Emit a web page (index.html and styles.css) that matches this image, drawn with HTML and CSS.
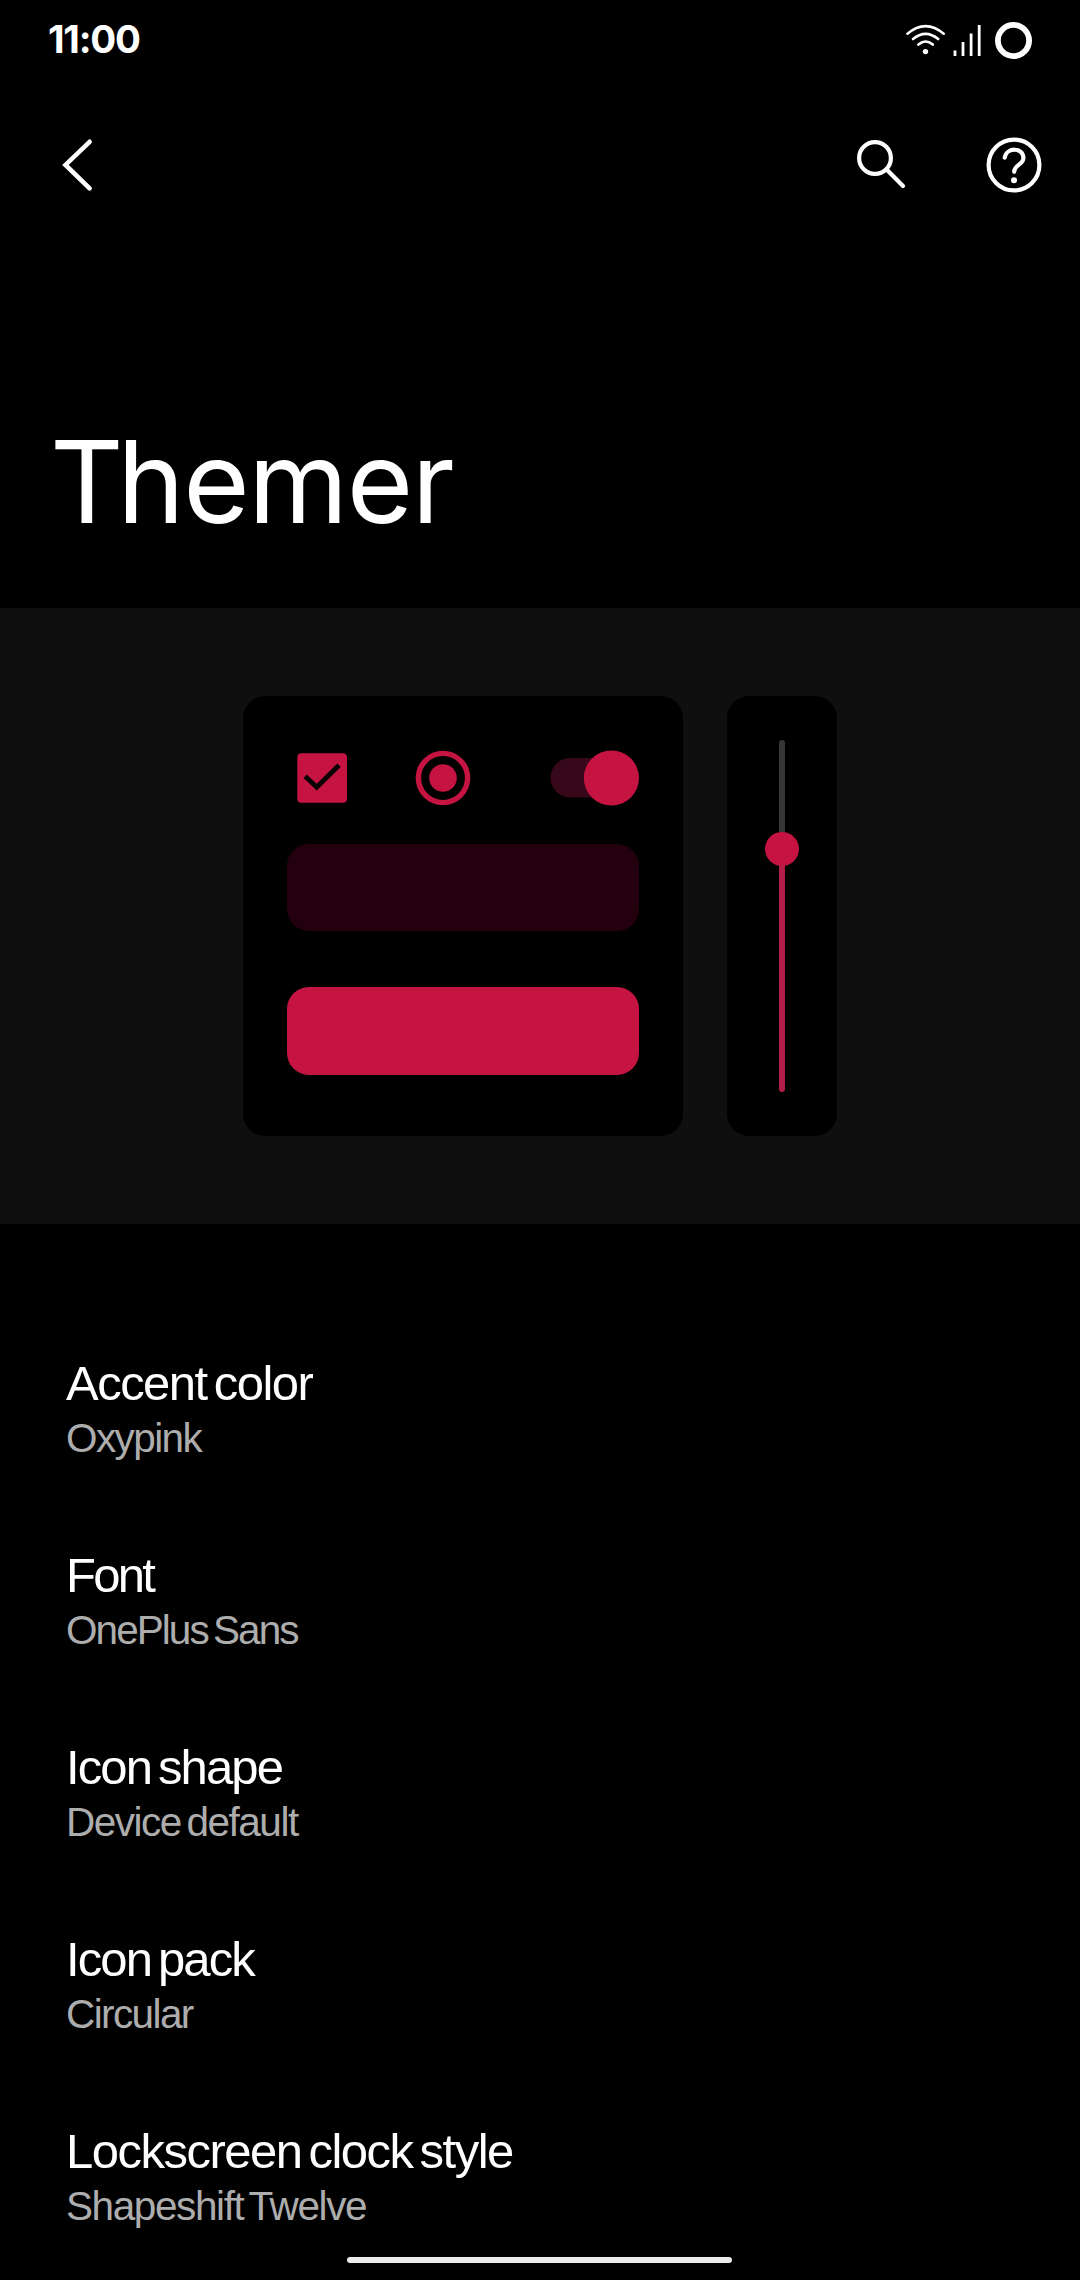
FILE: index.html
```html
<!DOCTYPE html>
<html lang="en">
<head>
<meta charset="utf-8">
<title>Themer</title>
<link rel="stylesheet" href="styles.css">
</head>
<body>
<div class="screen">
  <header class="status">
    <span class="clock">11:00</span>
    <svg class="status-icons" width="128" height="40" viewBox="904 20 128 40" fill="none" stroke="#fff" stroke-linecap="round">
      <g stroke-width="2.6">
        <path d="M907.5 33.7Q925.5 18.5 943.7 33.7"/>
        <path d="M913 39Q925.5 28.6 938.2 39"/>
        <path d="M918.4 44.6Q925.5 38.4 932.8 44.6"/>
      </g>
      <circle cx="925.5" cy="51.6" r="2.7" fill="#fff" stroke="none"/>
      <path stroke-width="2.8" stroke-linecap="butt" d="M955 56V50.6M963 56V42M971.1 56V33.6M979.2 56V25"/>
      <circle cx="1013.5" cy="40.5" r="15.6" stroke-width="5.8"/>
    </svg>
  </header>
  <nav class="bar">
    <svg width="36" height="60" viewBox="58 135 36 60" fill="none" stroke="#fff" stroke-width="4.6" stroke-linecap="round"><path d="M89.6 141.8L65.5 164.9L89.6 188.4"/></svg>
    <div class="actions">
      <svg width="56" height="60" viewBox="853 135 56 60" fill="none" stroke="#fff" stroke-width="4.2" stroke-linecap="round"><circle cx="875" cy="158" r="15.9"/><path d="M886.6 169.6L903 186"/></svg>
      <svg width="60" height="60" viewBox="984 135 60 60" fill="none" stroke="#fff" stroke-width="4.2" stroke-linecap="round"><circle cx="1014" cy="165" r="25.4"/><path d="M1004.7 157.6C1006.5 146.8 1023.4 147.2 1023.4 158.2C1023.4 164.6 1014.2 164.8 1014.2 171.8"/><circle cx="1014" cy="180.2" r="3" fill="#fff" stroke="none"/></svg>
    </div>
  </nav>
  <h1 class="heading"><span class="initial">T</span>hemer</h1>
  <section class="preview">
    <div class="card controls">
      <div class="toggles">
        <svg width="352" height="56" viewBox="287 750 352 56">
          <rect x="297.3" y="753.2" width="49.7" height="49.6" rx="4" fill="#c51342"/>
          <path d="M305.2 776.3L316.7 787.2L339 765.2" fill="none" stroke="#080003" stroke-width="4.8"/>
          <circle cx="443" cy="778" r="24.6" fill="none" stroke="#c51342" stroke-width="5.4"/>
          <circle cx="443" cy="778" r="13.8" fill="#c51342"/>
          <rect x="550.5" y="758" width="80" height="39.5" rx="19.75" fill="#37081a"/>
          <circle cx="611.4" cy="778" r="27.6" fill="#c51342"/>
        </svg>
      </div>
      <div class="button button-muted"></div>
      <div class="button button-accent"></div>
    </div>
    <div class="card slider">
      <div class="track"></div>
      <div class="thumb"></div>
      <div class="fill"></div>
    </div>
  </section>
  <main class="list">
    <div class="item"><div class="label l1">Accent color</div><div class="value v1">Oxypink</div></div>
    <div class="item"><div class="label l2">Font</div><div class="value v2">OnePlus Sans</div></div>
    <div class="item"><div class="label l3">Icon shape</div><div class="value v3">Device default</div></div>
    <div class="item"><div class="label l3">Icon pack</div><div class="value v1">Circular</div></div>
    <div class="item"><div class="label l1">Lockscreen clock style</div><div class="value v4">Shapeshift Twelve</div></div>
  </main>
  <footer class="gesture"><div class="pill"></div></footer>
</div>
</body>
</html>
```
FILE: styles.css
```css
* { box-sizing: border-box; }
body { margin: 0; background: #000; color: #fff; }
svg { display: block; }

.screen {
  width: 1080px;
  height: 2280px;
  display: flex;
  flex-direction: column;
  overflow: hidden;
  background: #000;
  font-family: "Liberation Sans", Arial, sans-serif;
}

/* Status bar and app bar */
.status {
  height: 80px;
  padding: 16px 48px 0;
  display: flex;
  justify-content: space-between;
}
.clock {
  font: 700 38.5px/46px Inter, sans-serif;
  letter-spacing: -1.25px;
}
.status-icons { margin-top: 4px; }
.bar {
  height: 115px;
  padding: 55px 36px 0 58px;
  display: flex;
  justify-content: space-between;
}
.actions { display: flex; gap: 75px; }

.heading {
  margin: 227px 0 66px;
  padding-left: 50px;
  font: 400 114px/120px Inter, sans-serif;
  letter-spacing: -1.4px;
}
.initial { letter-spacing: -6.4px; }

/* Theme preview */
.preview {
  height: 616px;
  padding: 88px 0;
  display: flex;
  justify-content: center;
  gap: 44px;
  background: #0f0f0f;
}
.card { background: #000; border-radius: 22px; }
.controls { width: 440px; padding: 54px 44px 0; }
.toggles { height: 94px; }
.button { height: 88px; border-radius: 22px; }
.button-muted { height: 87px; background: #24000e; }
.button-accent { margin-top: 56px; background: #c51342; }
.slider {
  width: 110px;
  padding: 44px 0;
  display: flex;
  flex-direction: column;
  align-items: center;
}
.track { width: 6px; height: 92px; border-radius: 3px 3px 0 0; background: #363636; }
.thumb { width: 34px; height: 34px; border-radius: 50%; background: #c51342; }
.fill { width: 6px; height: 227px; margin-top: -1px; border-radius: 0 0 3px 3px; background: #b31e49; }

/* Settings list */
.list {
  padding: 131px 0 0 66px;
  display: flex;
  flex-direction: column;
  gap: 85px;
}
.item { display: flex; flex-direction: column; gap: 3px; }
.label { font-size: 49px; line-height: 56px; word-spacing: -5px; white-space: nowrap; }
.value { font-size: 40.5px; line-height: 48px; word-spacing: -4px; color: #adadad; white-space: nowrap; }
.l1 { letter-spacing: -1.52px; }
.l2 { letter-spacing: -2.7px; }
.l3 { letter-spacing: -1.87px; }
.v1 { letter-spacing: -1.6px; }
.v2 { letter-spacing: -1.95px; }
.v3 { letter-spacing: -1.5px; }
.v4 { letter-spacing: -1.4px; }

/* Navigation gesture handle */
.gesture { margin-top: auto; padding: 0 1px 17px 0; display: flex; justify-content: center; }
.pill { width: 385px; height: 6px; border-radius: 3px; background: #ebebeb; }
```
